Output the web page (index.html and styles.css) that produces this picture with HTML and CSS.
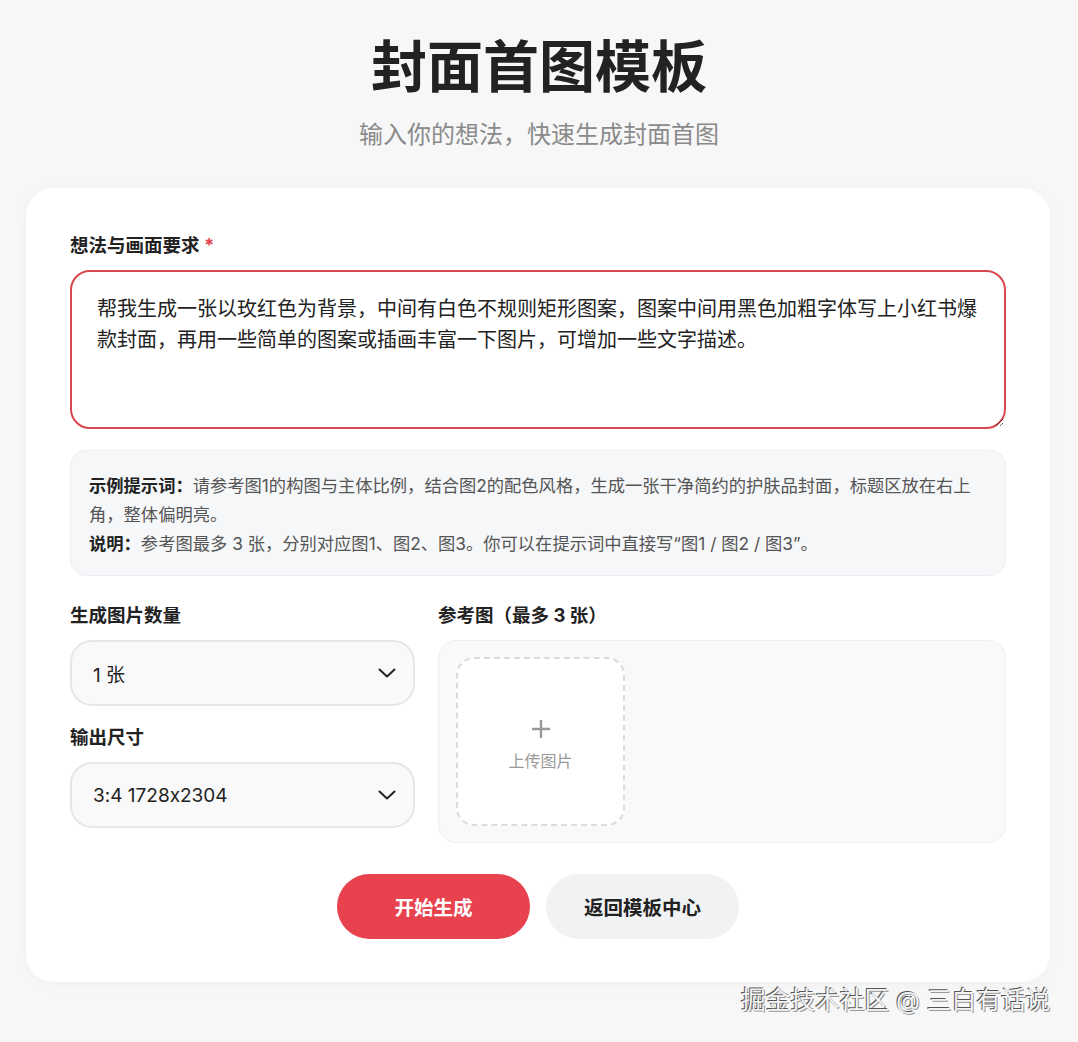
FILE: index.html
```html
<!DOCTYPE html>
<html lang="zh-CN">
<head>
<meta charset="utf-8">
<title>封面首图模板</title>
<link rel="stylesheet" href="styles.css">
</head>
<body>
<header class="hero">
  <h1 class="title">封面首图模板</h1>
  <p class="subtitle">输入你的想法，快速生成封面首图</p>
</header>
<main class="card">
  <label class="label" for="idea">想法与画面要求 <span class="req">*</span></label>
  <textarea id="idea" class="idea">帮我生成一张以玫红色为背景，中间有白色不规则矩形图案，图案中间用黑色加粗字体写上小红书爆款封面，再用一些简单的图案或插画丰富一下图片，可增加一些文字描述。</textarea>
  <div class="hints">
    <p><b>示例提示词：</b>请参考图1的构图与主体比例，结合图2的配色风格，生成一张干净简约的护肤品封面，标题区放在右上角，整体偏明亮。</p>
    <p><b>说明：</b>参考图最多 3 张，分别对应图1、图2、图3。你可以在提示词中直接写“图1 / 图2 / 图3”。</p>
  </div>
  <div class="options">
    <div class="left-col">
      <div class="label">生成图片数量</div>
      <div class="select">
        <span>1 张</span>
        <svg class="chev" width="18" height="10" viewBox="0 0 18 10"><path d="M1.5 1.5 L9 8.5 L16.5 1.5" fill="none" stroke="#222" stroke-width="2" stroke-linecap="round" stroke-linejoin="round"/></svg>
      </div>
      <div class="label label-second">输出尺寸</div>
      <div class="select">
        <span>3:4 1728x2304</span>
        <svg class="chev" width="18" height="10" viewBox="0 0 18 10"><path d="M1.5 1.5 L9 8.5 L16.5 1.5" fill="none" stroke="#222" stroke-width="2" stroke-linecap="round" stroke-linejoin="round"/></svg>
      </div>
    </div>
    <div class="right-col">
      <div class="label">参考图（最多 3 张）</div>
      <div class="refbox">
        <div class="upload">
          <svg width="22" height="22" viewBox="0 0 22 22"><path d="M11 2 V20 M2 11 H20" stroke="#9a9a9a" stroke-width="2.4"/></svg>
          <span>上传图片</span>
        </div>
      </div>
    </div>
  </div>
  <div class="actions">
    <button class="btn primary">开始生成</button>
    <button class="btn secondary">返回模板中心</button>
  </div>
</main>
<div class="watermark">掘金技术社区 @ 三白有话说</div>
</body>
</html>
```
FILE: styles.css
```css
* { box-sizing: border-box; }
html, body { margin: 0; padding: 0; }
body {
  background: #f7f7f8;
  font-family: "Inter", "Noto Sans CJK SC", sans-serif;
  font-feature-settings: "calt" 0;
  color: #222;
  padding-top: 34px;
  min-height: 1042px;
  position: relative;
}
.hero { text-align: center; }
.title {
  margin: 0;
  font-size: 56px;
  line-height: 67px;
  font-weight: 700;
  color: #222;
}
.subtitle {
  margin: 17px 0 0;
  font-size: 24px;
  line-height: 34px;
  color: #8a8a8a;
}
.card {
  width: 1024px;
  margin: 36px 0 0 26px;
  background: #fff;
  border-radius: 28px;
  padding: 44px 44px 43px;
  box-shadow: 0 2px 16px rgba(0,0,0,0.03);
}
.label {
  display: block;
  font-size: 18.5px;
  line-height: 26px;
  font-weight: 700;
  color: #222;
}
.req { color: #e0454f; }
.idea {
  display: block;
  width: 100%;
  height: 159px;
  margin-top: 12px;
  border: 2px solid #d9474f;
  border-radius: 20px;
  padding: 22px 25px;
  font-family: "Inter", "Noto Sans CJK SC", sans-serif;
  font-size: 20px;
  line-height: 31px;
  color: #222;
  background: #fff;
  outline: none;
  resize: vertical;
}
.hints {
  margin-top: 21px;
  background: #f6f7f9;
  border: 1px solid #eceef1;
  border-radius: 16px;
  padding: 20px 18px 17px;
  font-size: 17.3px;
  line-height: 29px;
  color: #555;
}
.hints p { margin: 0; }
.hints b { color: #222; font-weight: 700; }
.options {
  margin-top: 26px;
  display: grid;
  grid-template-columns: 345px 1fr;
  column-gap: 23px;
}
.select {
  margin-top: 12px;
  height: 66px;
  border: 2px solid #e6e6e6;
  border-radius: 22px;
  background: #f9f9f9;
  display: flex;
  align-items: center;
  justify-content: space-between;
  padding: 0 17px 0 21px;
  font-size: 19px;
  color: #222;
}
.label-second { margin-top: 18px; }
.refbox {
  margin-top: 12px;
  height: 203px;
  border: 1px solid #eeeeef;
  border-radius: 18px;
  background: #f9f9fa;
  padding: 16px 17px;
}
.upload {
  width: 169px;
  height: 169px;
  border: 2px dashed #dcdcdc;
  border-radius: 18px;
  background: #fff;
  display: flex;
  flex-direction: column;
  align-items: center;
  justify-content: center;
  gap: 10px;
  color: #9a9a9a;
  font-size: 16px;
  line-height: 22px;
}
.upload svg { margin-top: 6px; }
.actions {
  margin-top: 31px;
  display: flex;
  justify-content: center;
  gap: 16px;
}
.btn {
  width: 193px;
  height: 65px;
  border: none;
  border-radius: 33px;
  font-family: "Inter", "Noto Sans CJK SC", sans-serif;
  font-size: 19.5px;
  font-weight: 700;
}
.primary { background: #e8424f; color: #fff; }
.secondary { background: #f1f2f4; color: #222; }
.watermark {
  position: absolute;
  left: 741px;
  top: 983px;
  font-size: 24.7px;
  line-height: 34px;
  color: #f4f4f4;
  text-shadow: -1px -1px 0 #555, 1px 1px 0 #999;
}
```
